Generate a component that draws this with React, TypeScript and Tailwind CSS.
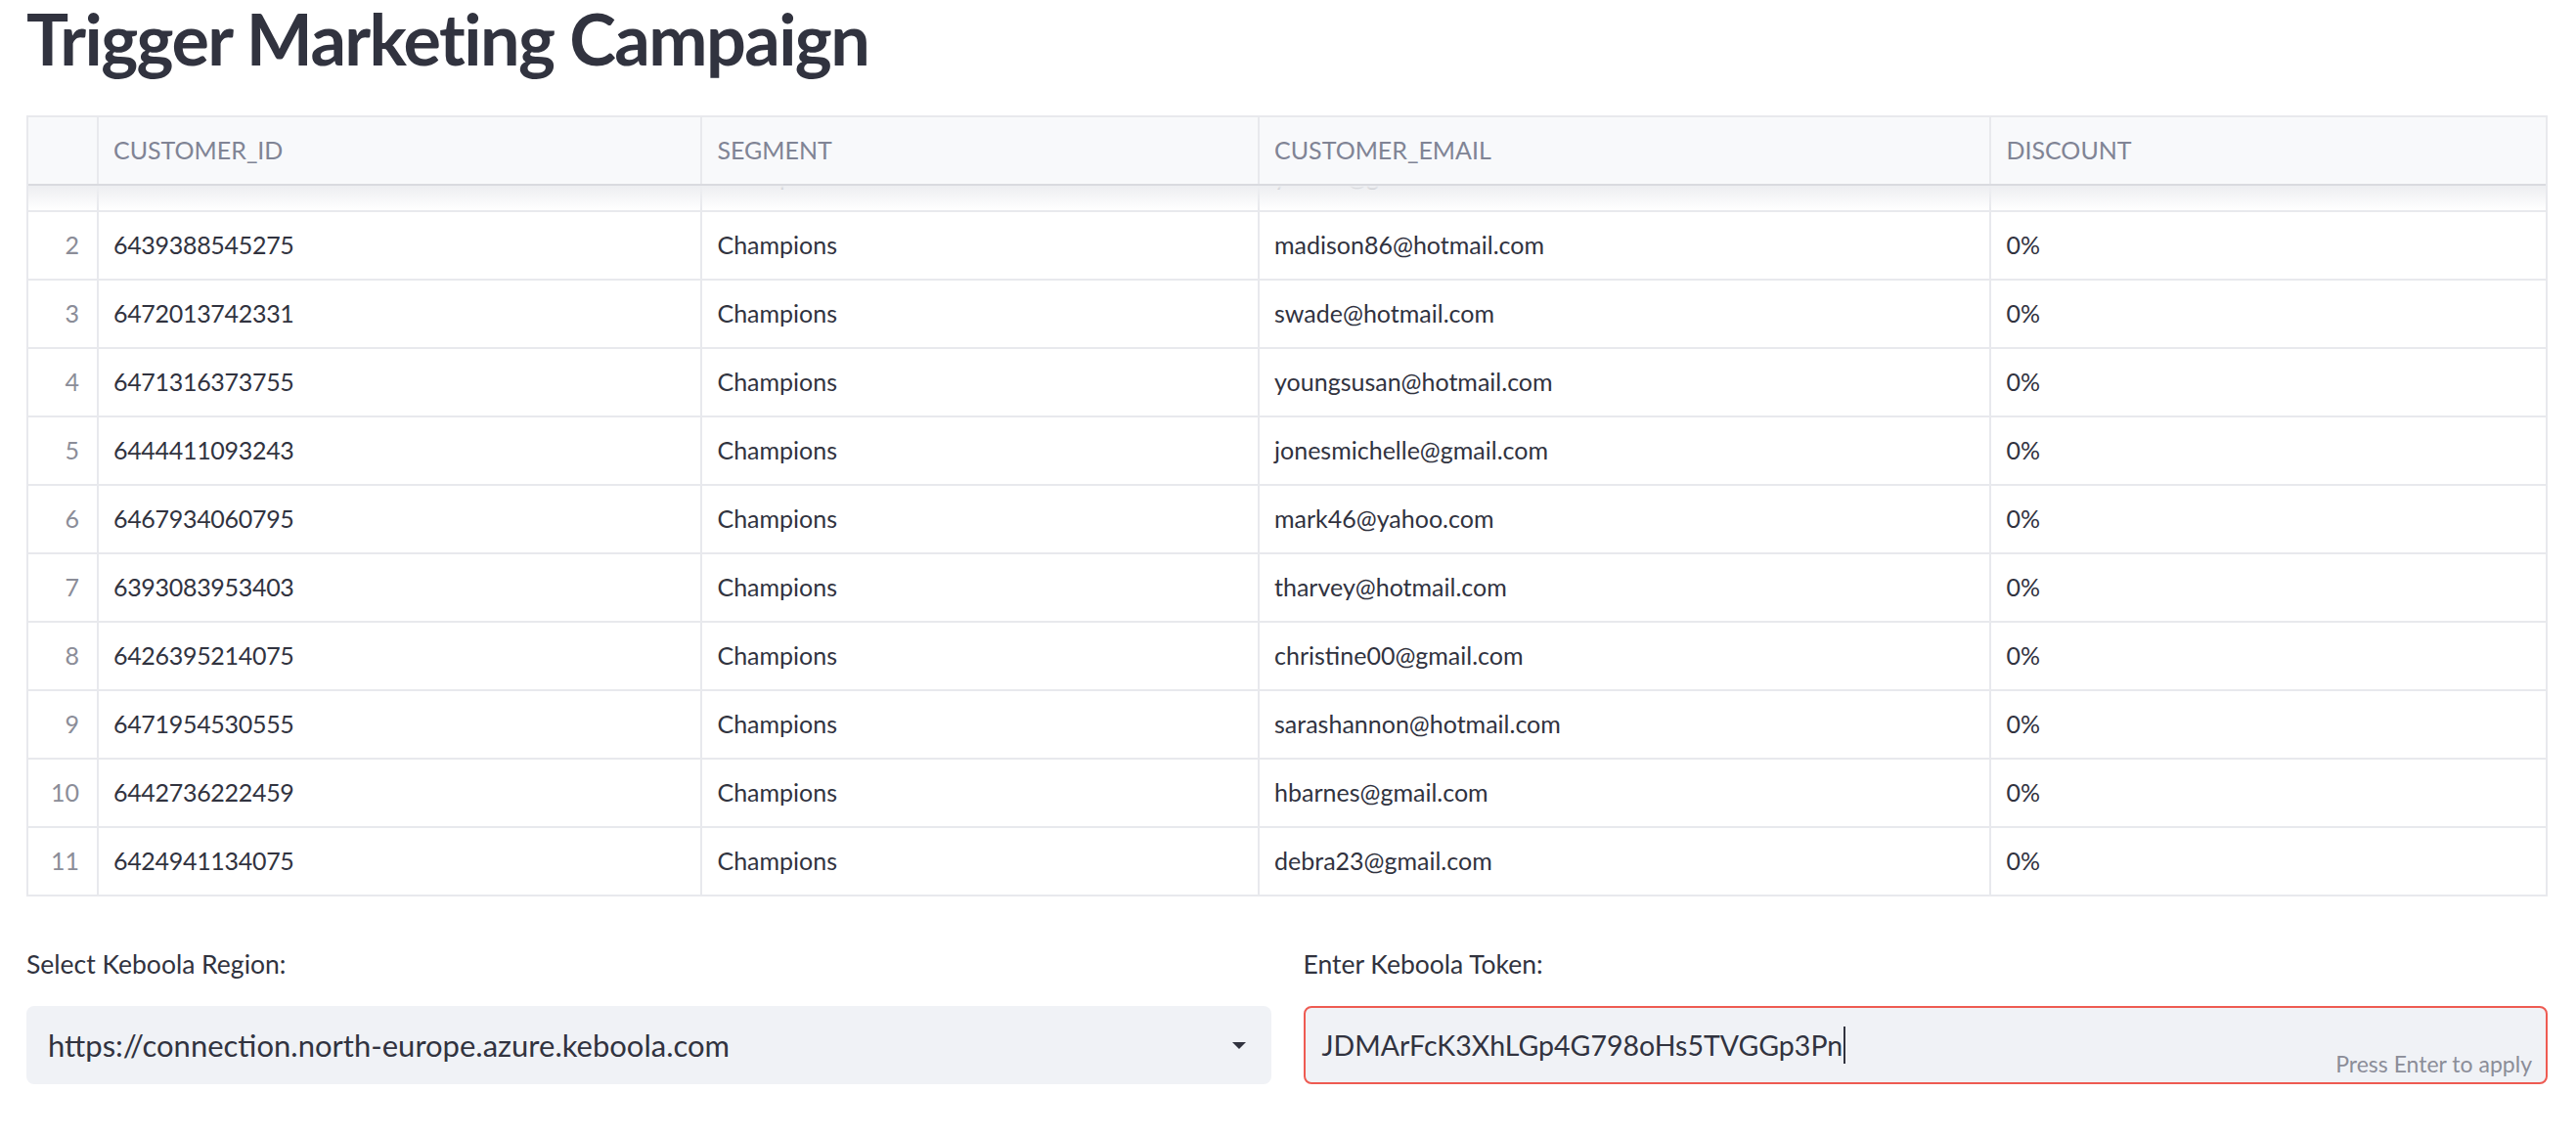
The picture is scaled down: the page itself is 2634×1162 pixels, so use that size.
const COLS = ["w-[72px]", "w-[618px]", "w-[570px]", "w-[749px]", "w-[567px]"];

const rows = [
  { n: 2, id: "6439388545275", seg: "Champions", email: "madison86@hotmail.com", disc: "0%" },
  { n: 3, id: "6472013742331", seg: "Champions", email: "swade@hotmail.com", disc: "0%" },
  { n: 4, id: "6471316373755", seg: "Champions", email: "youngsusan@hotmail.com", disc: "0%" },
  { n: 5, id: "6444411093243", seg: "Champions", email: "jonesmichelle@gmail.com", disc: "0%" },
  { n: 6, id: "6467934060795", seg: "Champions", email: "mark46@yahoo.com", disc: "0%" },
  { n: 7, id: "6393083953403", seg: "Champions", email: "tharvey@hotmail.com", disc: "0%" },
  { n: 8, id: "6426395214075", seg: "Champions", email: "christine00@gmail.com", disc: "0%" },
  { n: 9, id: "6471954530555", seg: "Champions", email: "sarashannon@hotmail.com", disc: "0%" },
  { n: 10, id: "6442736222459", seg: "Champions", email: "hbarnes@gmail.com", disc: "0%" },
  { n: 11, id: "6424941134075", seg: "Champions", email: "debra23@gmail.com", disc: "0%" },
];

type Row = { n: number; id: string; seg: string; email: string; disc: string };

function DataRow({ r }: { r: Row }) {
  return (
    <div className="flex h-[68px] items-center text-[25px] text-[#31333F]">
      <div className={`${COLS[0]} h-full flex items-center justify-end pr-[18px] text-[#8B8D98] border-r-2 border-[#E8E9ED]`}>
        {r.n}
      </div>
      <div className={`${COLS[1]} h-full flex items-center pl-[15px] tracking-[-0.3px] border-r-2 border-[#E8E9ED]`}>{r.id}</div>
      <div className={`${COLS[2]} h-full flex items-center pl-[15px] border-r-2 border-[#E8E9ED]`}>{r.seg}</div>
      <div className={`${COLS[3]} h-full flex items-center pl-[15px] border-r-2 border-[#E8E9ED]`}>{r.email}</div>
      <div className={`${COLS[4]} h-full flex items-center pl-[15px]`}>{r.disc}</div>
    </div>
  );
}

export default function App() {
  return (
    <div className="w-[2634px] h-[1162px] bg-white px-[27px] font-['Lato',sans-serif] text-[#31333F] overflow-hidden">
      {/* Title */}
      <h1 className="text-[72px] leading-[78px] font-bold tracking-[-1.6px] text-[#31333F]">Trigger Marketing Campaign</h1>

      {/* Data grid */}
      <div className="mt-[40px] w-[2578px] border-2 border-[#E8E9ED]">
        <div className="flex h-[70px] items-center bg-[#F8F9FB] border-b-2 border-[#D9DADF] text-[25px] text-[#808495]">
          <div className={`${COLS[0]} h-full border-r-2 border-[#E8E9ED]`} />
          <div className={`${COLS[1]} h-full flex items-center pl-[15px] border-r-2 border-[#E8E9ED]`}>CUSTOMER_ID</div>
          <div className={`${COLS[2]} h-full flex items-center pl-[15px] border-r-2 border-[#E8E9ED]`}>SEGMENT</div>
          <div className={`${COLS[3]} h-full flex items-center pl-[15px] border-r-2 border-[#E8E9ED]`}>CUSTOMER_EMAIL</div>
          <div className={`${COLS[4]} h-full flex items-center pl-[15px]`}>DISCOUNT</div>
        </div>

        {/* partially scrolled first row */}
        <div className="relative h-[25px] overflow-hidden">
          <div className="-mt-[43px]">
            <DataRow r={{ n: 1, id: "6450137722931", seg: "Champions", email: "ysmith@gmail.com", disc: "0%" }} />
          </div>
          <div className="absolute inset-0 bg-gradient-to-b from-[#EDEEF1] to-white/0" />
        </div>

        {rows.map((r) => (
          <div key={r.n} className="border-t-2 border-[#E8E9ED]">
            <DataRow r={r} />
          </div>
        ))}
      </div>

      {/* Inputs */}
      <div className="mt-[52px] grid grid-cols-2 gap-[33px] w-[2578px]">
        <div>
          <div className="h-[36px] flex items-center text-[26.5px] text-[#31333F]">Select Keboola Region:</div>
          <div className="mt-[24px] h-[80px] rounded-[8px] bg-[#F0F2F6] flex items-center justify-between pl-[22px] pr-[26px]">
            <span className="text-[31px] text-[#31333F]">https://connection.north-europe.azure.keboola.com</span>
            <svg width="14" height="7" viewBox="0 0 14 7">
              <path d="M0 0 H14 L7 7 Z" fill="#31333F" />
            </svg>
          </div>
        </div>
        <div>
          <div className="h-[36px] flex items-center text-[26.5px] text-[#31333F]">Enter Keboola Token:</div>
          <div className="mt-[24px] h-[80px] rounded-[8px] bg-[#F0F2F6] border-2 border-[#EE5B52] flex items-center pl-[17px] pr-[14px] relative">
            <span className="text-[28.5px] text-[#31333F]">JDMArFcK3XhLGp4G798oHs5TVGGp3Pn</span>
            <span className="w-[2px] h-[38px] bg-[#31333F] ml-[1px]" />
            <span className="absolute right-[14px] bottom-[2px] text-[23px] text-[#8B8D98]">Press Enter to apply</span>
          </div>
        </div>
      </div>
    </div>
  );
}
